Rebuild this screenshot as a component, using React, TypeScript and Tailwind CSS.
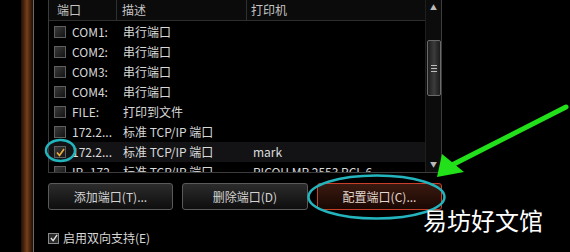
import React from 'react';

const rows = [
    { port: 'COM1:', desc: '串行端口', printer: '' },
    { port: 'COM2:', desc: '串行端口', printer: '' },
    { port: 'COM3:', desc: '串行端口', printer: '' },
    { port: 'COM4:', desc: '串行端口', printer: '' },
    { port: 'FILE:', desc: '打印到文件', printer: '' },
    { port: '172.2...', desc: '标准 TCP/IP 端口', printer: '' },
    { port: '172.2...', desc: '标准 TCP/IP 端口', printer: 'mark', checked: true },
    { port: 'IP_172...', desc: '标准 TCP/IP 端口', printer: 'RICOH MP 2553 PCL 6' },
];

const font = { fontFamily: '"Noto Sans CJK SC", "Liberation Sans", sans-serif' };

const Box = ({ checked }: { checked?: boolean }) => (
    <div className="w-[12px] h-[12px] flex-none border border-[#5e5e5e] bg-gradient-to-br from-[#3a3a3a] to-[#151515] flex items-center justify-center">
        {checked && (
            <svg width="9" height="9" viewBox="0 0 9 9">
                <path d="M1 4.5 L3.5 7.5 L8 1" stroke="#f0b040" strokeWidth="1.6" fill="none" />
            </svg>
        )}
    </div>
);

const Button = ({ label, active }: { label: string; active?: boolean }) => (
    <div
        className={
            active
                ? 'h-[27px] flex items-center justify-center rounded-[3px] border border-[#c8402a] bg-gradient-to-b from-[#3a1a10] to-[#1a0804] text-[12px] text-[#e0d8d0]'
                : 'h-[27px] flex items-center justify-center rounded-[3px] border border-[#5a5a5a] bg-gradient-to-b from-[#2c2c2c] to-[#0e0e0e] text-[12px] text-[#d4d4d4]'
        }
    >
        {label}
    </div>
);

export default function App() {
    return (
        <div className="relative w-[570px] h-[252px] bg-black overflow-hidden flex" style={font}>
            <div className="w-[21px] flex-none" />
            <div className="w-[12px] flex-none bg-gradient-to-r from-[#220e04] via-[#76401c] to-[#220e04]" />
            <div className="w-[1px] flex-none bg-[#6a6a6a]" />
            <div className="w-[14px] flex-none" />

            <div className="flex flex-col w-[394px] flex-none">
                {/* port list */}
                <div className="h-[173px] flex border border-t-0 border-[#3c3c3c] overflow-hidden">
                    <div className="flex-1 flex flex-col overflow-hidden">
                        <div className="h-[21px] flex-none flex items-center bg-[#0b0b0b] border-b border-[#2e2e2e] text-[12px] text-[#c4c4c4]">
                            <div className="w-[68px] pl-[8px] h-full flex items-center border-r border-[#303030]">端口</div>
                            <div className="w-[130px] pl-[5px] h-full flex items-center border-r border-[#303030]">描述</div>
                            <div className="flex-1 pl-[4px]">打印机</div>
                        </div>
                        <div className="h-[1px] flex-none" />
                        {rows.map((r, i) => (
                            <div
                                key={i}
                                className={
                                    r.checked
                                        ? 'h-[20px] flex-none flex items-center text-[12px] text-[#dcdcdc] bg-[#131316]'
                                        : 'h-[20px] flex-none flex items-center text-[12px] text-[#d8d8d8]'
                                }
                            >
                                <div className="w-[68px] pl-[5px] flex items-center gap-[6px] whitespace-nowrap">
                                    <Box checked={r.checked} />
                                    <span>{r.port}</span>
                                </div>
                                <div className="w-[130px] pl-[6px] whitespace-nowrap">{r.desc}</div>
                                <div className="flex-1 pl-[6px] whitespace-nowrap">{r.printer}</div>
                            </div>
                        ))}
                    </div>
                    {/* scrollbar */}
                    <div className="w-[16px] flex-none flex flex-col items-center bg-[#0c0c0c] border-l border-[#1e1e1e]">
                        <div className="h-[14px] flex items-center justify-center text-[7px] text-[#bbbbbb]">▲</div>
                        <div className="h-[26px]" />
                        <div className="w-[14px] h-[56px] rounded-[2px] border border-[#6a6a6a] bg-gradient-to-r from-[#1c1c1c] via-[#3c3c3c] to-[#1c1c1c] flex flex-col items-center justify-center gap-[2px]">
                            <div className="w-[6px] h-[1px] bg-[#bdbdbd]" />
                            <div className="w-[6px] h-[1px] bg-[#bdbdbd]" />
                            <div className="w-[6px] h-[1px] bg-[#bdbdbd]" />
                        </div>
                        <div className="flex-1" />
                        <div className="h-[16px] flex items-center justify-center text-[7px] text-[#bbbbbb]">▼</div>
                    </div>
                </div>

                {/* buttons */}
                <div className="mt-[10px] grid grid-cols-[125px_126px_125px] gap-x-[9px]">
                    <Button label="添加端口(T)..." />
                    <Button label="删除端口(D)" />
                    <Button label="配置端口(C)..." active />
                </div>

                <div className="mt-[19px] flex items-center gap-[4px] text-[12px] text-[#d8d8d8]">
                    <div className="w-[11px] h-[11px] border border-[#8a8a8a] bg-[#2a2a2a] flex items-center justify-center">
                        <svg width="8" height="8" viewBox="0 0 9 9">
                            <path d="M1 4.5 L3.5 7.5 L8 1" stroke="#e8e8e8" strokeWidth="1.5" fill="none" />
                        </svg>
                    </div>
                    <span>启用双向支持(E)</span>
                </div>
            </div>

            {/* annotations */}
            <svg className="absolute left-0 top-0" width="570" height="252" viewBox="0 0 570 252">
                <ellipse cx="60.5" cy="150.5" rx="14.5" ry="10.5" fill="none" stroke="#23b4bd" strokeWidth="2.5" />
                <ellipse cx="376.5" cy="197" rx="68" ry="21.5" fill="none" stroke="#23b4bd" strokeWidth="2.5" />
                <line x1="566" y1="107" x2="452" y2="165" stroke="#22e01a" strokeWidth="5" strokeLinecap="round" />
                <polygon points="437,177 442,154 464,172" fill="#22e01a" />
            </svg>

            <div className="absolute left-[423px] top-[205px] text-[24px] leading-[30px] text-white tracking-[0px]">易坊好文馆</div>
        </div>
    );
}
